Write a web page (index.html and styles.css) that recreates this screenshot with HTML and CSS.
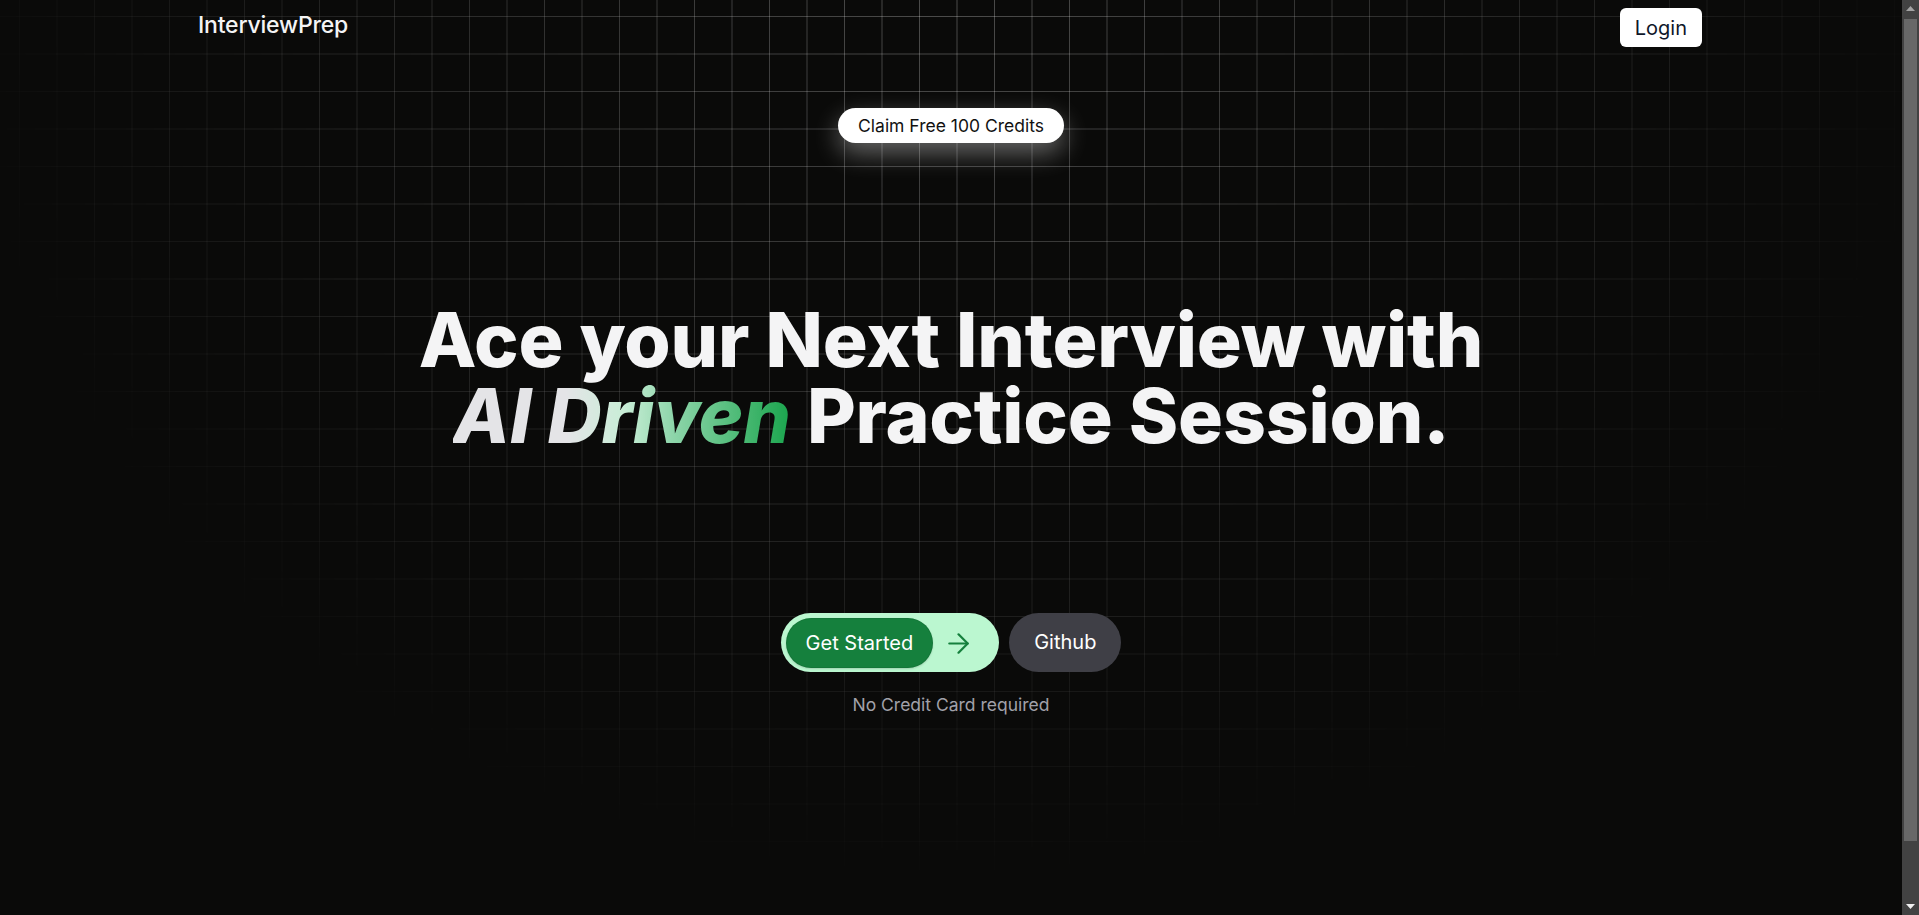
FILE: index.html
```html
<!DOCTYPE html>
<html lang="en">
<head>
<meta charset="utf-8">
<title>InterviewPrep</title>
<link rel="stylesheet" href="styles.css">
</head>
<body>
<div class="window">
  <div class="viewport">
    <div class="page">
      <header class="nav">
        <div class="nav-inner">
          <a class="logo" href="#">InterviewPrep</a>
          <button class="login" type="button">Login</button>
        </div>
      </header>
      <main class="hero">
        <div class="claim">Claim Free 100 Credits</div>
        <h1 class="title"><span class="line">Ace your Next Interview with</span><span class="line"><span class="grad">AI Driven</span> Practice Session.</span></h1>
        <div class="actions">
          <a class="start" href="#">
            <span class="start-label">Get Started</span>
            <svg class="arrow" width="21" height="21" viewBox="4 4 16 16" fill="none" stroke="currentColor" stroke-width="1.7" stroke-linecap="round" stroke-linejoin="round"><path d="M5 12h14"/><path d="M12 5l7 7-7 7"/></svg>
          </a>
          <a class="github" href="#">Github</a>
        </div>
        <p class="note">No Credit Card required</p>
      </main>
    </div>
  </div>
  <div class="scrollbar" aria-hidden="true">
    <div class="sb-btn">
      <svg width="9" height="5" viewBox="0 0 9 5"><path d="M0 5L4.5 0L9 5Z" fill="#a3a3a3"/></svg>
    </div>
    <div class="sb-track">
      <div class="sb-thumb"></div>
    </div>
    <div class="sb-btn">
      <svg width="9" height="5" viewBox="0 0 9 5"><path d="M0 0L9 0L4.5 5Z" fill="#f0f0f0"/></svg>
    </div>
  </div>
</div>
</body>
</html>
```

FILE: styles.css
```css
:root {
  color-scheme: dark;
}

html, body {
  margin: 0;
  padding: 0;
  height: 100%;
  overflow: hidden;
  background: #0a0a09;
}

body {
  font-family: "Inter", "Liberation Sans", sans-serif;
  color: #f4f4f5;
}

.window {
  display: flex;
  height: 100vh;
}

.viewport {
  flex: 1;
  min-width: 0;
  overflow: hidden;
}

.scrollbar {
  width: 17px;
  flex: none;
  display: flex;
  flex-direction: column;
  background: #424242;
}

.sb-btn {
  height: 17px;
  display: flex;
  align-items: center;
  justify-content: center;
}

.sb-track {
  flex: 1;
  padding: 2px 2px 0;
}

.sb-thumb {
  height: 822px;
  background: #686868;
}

.page {
  position: relative;
  min-height: 980px;
  background-color: #0a0a09;
}

.page::before {
  content: "";
  position: absolute;
  inset: 0;
  background-image:
    linear-gradient(to right, rgba(255, 255, 255, 0.27) 1px, transparent 1px),
    linear-gradient(to bottom, rgba(255, 255, 255, 0.27) 1px, transparent 1px);
  background-size: 37.5px 37.5px;
  background-position: 19px 16px;
  -webkit-mask-image: radial-gradient(ellipse 1000px 890px at 50% 0%, #000 0%, rgba(0,0,0,0.6) 40%, transparent 100%);
  mask-image: radial-gradient(ellipse 1000px 890px at 50% 0%, #000 0%, rgba(0,0,0,0.6) 40%, transparent 100%);
  pointer-events: none;
}

.nav {
  position: relative;
  padding: 8px 0;
}

.nav-inner {
  max-width: 1536px;
  margin: 0 auto;
  padding: 0 17px 0 15px;
  box-sizing: border-box;
  display: flex;
  align-items: center;
  justify-content: space-between;
}

.logo {
  font-size: 23px;
  font-weight: 500;
  color: #f4f4f5;
  text-decoration: none;
  letter-spacing: -0.2px;
  margin-top: -5px;
}

.login {
  font-family: inherit;
  font-size: 20px;
  line-height: 28px;
  padding: 5.5px 15px;
  background: #ffffff;
  color: #0f172a;
  border: none;
  border-radius: 6px;
  cursor: pointer;
}

.hero {
  position: relative;
  display: flex;
  flex-direction: column;
  align-items: center;
}

.claim {
  margin-top: 53px;
  background: #ffffff;
  color: #111111;
  font-size: 17.5px;
  line-height: 24px;
  padding: 5.5px 20px;
  border-radius: 999px;
  box-shadow: 0 10px 26px rgba(255, 255, 255, 0.38);
}

.title {
  margin: 159px 0 0;
  font-size: 75px;
  line-height: 76px;
  font-weight: 800;
  letter-spacing: -0.2px;
  text-align: center;
  color: #f4f4f5;
  display: flex;
  flex-direction: column;
  align-items: center;
}

.line {
  display: block;
  height: 76px;
  white-space: nowrap;
}

.grad {
  display: inline-block;
  font-style: italic;
  padding-right: 4px;
  margin-right: -4px;
  background-image: linear-gradient(to right, #e4e4e7 0%, #e4e4e7 33%, #c9eed7 50%, #8fd6ab 64%, #16a34a 100%);
  -webkit-background-clip: text;
  background-clip: text;
  color: transparent;
}

.actions {
  margin-top: 159px;
  display: flex;
  align-items: center;
  gap: 10px;
}

.start {
  display: flex;
  align-items: center;
  background: #bbf7d0;
  border-radius: 999px;
  padding: 5px 30px 4px 5px;
  text-decoration: none;
}

.start-label {
  display: block;
  background: #15803d;
  color: #ffffff;
  font-size: 20px;
  line-height: 50px;
  padding: 0 20px;
  border-radius: 999px;
  box-shadow: inset 0 0 0 1px rgba(0, 0, 0, 0.08), 0 1px 2px rgba(0, 0, 0, 0.15);
}

.arrow {
  margin-left: 15px;
  color: #15803d;
}

.github {
  display: block;
  background: #3f3f46;
  color: #ffffff;
  font-size: 20px;
  line-height: 59px;
  padding: 0 25px;
  border-radius: 999px;
  text-decoration: none;
}

.note {
  margin: 19px 0 0;
  font-size: 17.5px;
  line-height: 28px;
  color: #a1a1aa;
}
```
